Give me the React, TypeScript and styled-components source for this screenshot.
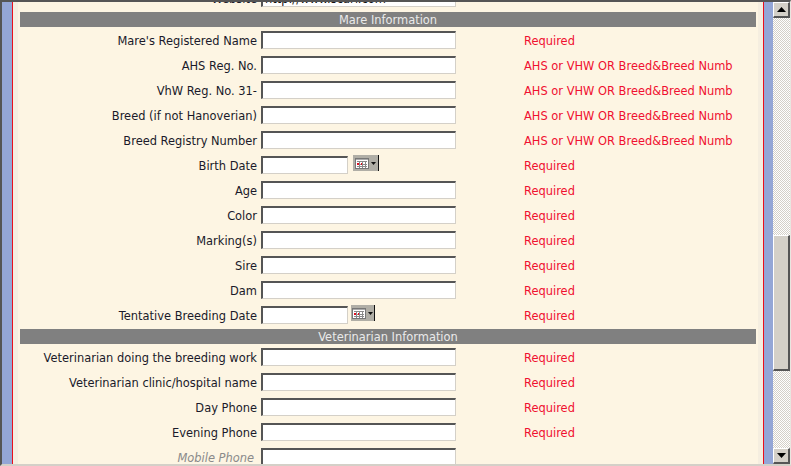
import styled, { createGlobalStyle } from "styled-components"

const GlobalStyle = createGlobalStyle`
  html, body {
    margin: 0;
    padding: 0;
    overflow: hidden;
    background: #d4d0c8;
  }
`

const Viewport = styled.div`
  width: 791px;
  height: 466px;
  box-sizing: border-box;
  display: flex;
  overflow: hidden;
  border-top: 2px solid #555;
  border-left: 2px solid #555;
  border-bottom: 2px solid #d4d0c8;
  border-right: 1px solid #e8e6e0;
  background: #94a6d6;
  font-family: "DejaVu Sans", Verdana, sans-serif;
  font-size: 11.45px;
`

const SideStrip = styled.div<{ $right?: boolean }>`
  flex: none;
  width: ${({ $right }) => ($right ? "9px" : "10px")};
  background: #94a6d6;
`

const Page = styled.div`
  flex: 1;
  min-width: 0;
  border-left: 1px solid #ea0f1c;
  border-right: 1px solid #ea0f1c;
  background: #f5eee0;
  padding: 0 5px;
  overflow: hidden;
`

const Content = styled.div`
  margin-top: -13px;
  background: #fdf5e3;
  padding: 0 2px;
  height: 500px;
`

const Section = styled.div`
  margin-bottom: 5px;
`

const SectionBar = styled.div`
  height: 15px;
  line-height: 17px;
  margin-bottom: 4px;
  background: #808080;
  color: #eaeaea;
  text-align: center;
`

const Rows = styled.div`
  display: grid;
  grid-template-columns: 237px 267px 1fr;
  row-gap: 7px;
`

const RowGroup = styled.div`
  display: contents;
`

const Label = styled.label<{ $optional?: boolean }>`
  height: 18px;
  line-height: 20px;
  text-align: right;
  white-space: nowrap;
  color: ${({ $optional }) => ($optional ? "#8a8a8a" : "#1a1a2a")};
  font-style: ${({ $optional }) => ($optional ? "italic" : "normal")};
  padding-right: ${({ $optional }) => ($optional ? "3px" : "0")};
`

const FieldCell = styled.div`
  display: flex;
  align-items: flex-start;
  padding-left: 4px;
  height: 18px;
`

const TextInput = styled.input<{ $short?: boolean }>`
  box-sizing: border-box;
  width: ${({ $short }) => ($short ? "87px" : "195px")};
  height: 18px;
  margin: 0;
  padding: 0 2px;
  border-width: 2px 1px 1px 2px;
  border-style: solid;
  border-color: #555 #d4d0c8 #d4d0c8 #555;
  border-radius: 0;
  outline: none;
  background: #fff;
  color: #111;
  font-family: inherit;
  font-size: 11.45px;
`

const Hint = styled.span`
  height: 18px;
  line-height: 20px;
  color: #f01030;
  white-space: nowrap;
`

const CalendarButton = styled.button<{ $near?: boolean }>`
  flex: none;
  box-sizing: border-box;
  width: ${({ $near }) => ($near ? "24px" : "26px")};
  height: 16px;
  margin: -1px 0 0 ${({ $near }) => ($near ? "3px" : "5px")};
  padding: 0 0 0 ${({ $near }) => ($near ? "1px" : "2px")};
  display: flex;
  align-items: center;
  gap: 2px;
  border: 0;
  border-right: 1px solid #111;
  background: #b0aea6;
`

const ScrollBar = styled.div`
  flex: none;
  width: 17px;
  display: flex;
  flex-direction: column;
  background-color: #fff;
  background-image: repeating-conic-gradient(#d4d0c8 0 25%, #fff 0 50%);
  background-size: 2px 2px;
`

const ScrollArrow = styled.button`
  flex: none;
  box-sizing: border-box;
  width: 17px;
  height: 16px;
  padding: 0;
  display: flex;
  align-items: center;
  justify-content: center;
  border-width: 1px 2px 2px 1px;
  border-style: solid;
  border-color: #fff #555 #555 #fff;
  background: #d4d0c8;
`

const Track = styled.div<{ $grow: number }>`
  flex: ${({ $grow }) => $grow} 0 0;
`

const Thumb = styled.div`
  flex: none;
  box-sizing: border-box;
  height: 136px;
  border-width: 1px 2px 2px 1px;
  border-style: solid;
  border-color: #fff #555 #555 #fff;
  background: #d4d0c8;
`

const CalendarIcon = () => (
  <svg width="14" height="11" viewBox="0 0 14 11" aria-hidden="true">
    <rect x="0.5" y="0.5" width="13" height="10" fill="#fff" stroke="#777" />
    <rect x="1" y="1" width="12" height="1" fill="#aaa" />
    <path d="M4 3h1v7H4zM7 3h1v7H7zM10 3h1v7h-1zM2 3h10v1H2zM2 6h10v1H2zM2 8h10v1H2z" fill="#8a8a8a" />
    <rect x="2" y="5" width="2" height="2" fill="#e01020" />
    <rect x="6" y="5" width="1" height="2" fill="#e01020" />
  </svg>
)

const CaretDown = () => (
  <svg width="5" height="3" viewBox="0 0 5 3" aria-hidden="true">
    <path d="M0 0h5L2.5 3z" fill="#111" />
  </svg>
)

const ArrowGlyph = ({ up }: { up?: boolean }) => (
  <svg width="9" height="5" viewBox="0 0 9 5" aria-hidden="true">
    <path d={up ? "M4.5 0L9 5H0z" : "M0 0h9L4.5 5z"} fill="#000" />
  </svg>
)

const REG = "AHS or VHW OR Breed&Breed Numb"

interface Field {
  label: string
  hint?: string
  date?: "near" | "far"
  optional?: boolean
  value?: string
}

const websiteRow: Field[] = [{ label: "Website", value: "http://www.scarf.com" }]

const mareRows: Field[] = [
  { label: "Mare's Registered Name", hint: "Required" },
  { label: "AHS Reg. No.", hint: REG },
  { label: "VhW Reg. No. 31-", hint: REG },
  { label: "Breed (if not Hanoverian)", hint: REG },
  { label: "Breed Registry Number", hint: REG },
  { label: "Birth Date", hint: "Required", date: "far" },
  { label: "Age", hint: "Required" },
  { label: "Color", hint: "Required" },
  { label: "Marking(s)", hint: "Required" },
  { label: "Sire", hint: "Required" },
  { label: "Dam", hint: "Required" },
  { label: "Tentative Breeding Date", hint: "Required", date: "near" },
]

const vetRows: Field[] = [
  { label: "Veterinarian doing the breeding work", hint: "Required" },
  { label: "Veterinarian clinic/hospital name", hint: "Required" },
  { label: "Day Phone", hint: "Required" },
  { label: "Evening Phone", hint: "Required" },
  { label: "Mobile Phone", optional: true },
]

const FormRows = ({ fields }: { fields: Field[] }) => (
  <Rows>
    {fields.map(({ label, hint, date, optional, value }) => (
      <RowGroup key={label}>
        <Label $optional={optional}>{label}</Label>
        <FieldCell>
          <TextInput $short={!!date} defaultValue={value} />
          {date && (
            <CalendarButton $near={date === "near"}>
              <CalendarIcon />
              <CaretDown />
            </CalendarButton>
          )}
        </FieldCell>
        <Hint>{hint}</Hint>
      </RowGroup>
    ))}
  </Rows>
)

const App = () => (
  <>
    <GlobalStyle />
    <Viewport>
      <SideStrip />
      <Page>
        <Content>
          <Section>
            <FormRows fields={websiteRow} />
          </Section>
          <Section>
            <SectionBar>Mare Information</SectionBar>
            <FormRows fields={mareRows} />
          </Section>
          <Section>
            <SectionBar>Veterinarian Information</SectionBar>
            <FormRows fields={vetRows} />
          </Section>
        </Content>
      </Page>
      <SideStrip $right />
      <ScrollBar>
        <ScrollArrow>
          <ArrowGlyph up />
        </ScrollArrow>
        <Track $grow={218} />
        <Thumb />
        <Track $grow={77} />
        <ScrollArrow>
          <ArrowGlyph />
        </ScrollArrow>
      </ScrollBar>
    </Viewport>
  </>
)

export default App
